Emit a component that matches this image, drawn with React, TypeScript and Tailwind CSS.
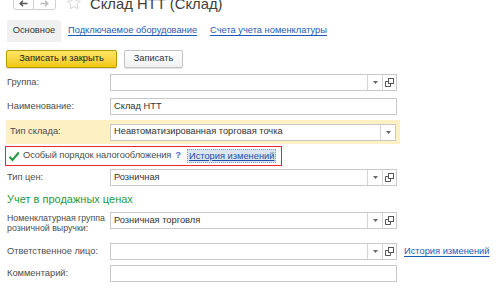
import React from 'react';

const F = { fontFamily: '"Liberation Sans", Arial, sans-serif' };

const Drop: React.FC = () => (
  <div className="w-[15px] h-full border-l border-[#d4d4d4] flex items-center justify-center">
    <svg width="5" height="3" viewBox="0 0 5 3"><path d="M0 0h5L2.5 3z" fill="#666" /></svg>
  </div>
);

const OpenBtn: React.FC = () => (
  <div className="w-[14px] h-full border-l border-[#d4d4d4] flex items-center justify-center">
    <svg width="9" height="9" viewBox="0 0 9 9" fill="none" stroke="#555" strokeWidth="1">
      <rect x="3.5" y="0.5" width="5" height="5" />
      <path d="M3.5 3.5h-3v5h5v-3" />
    </svg>
  </div>
);

const Field: React.FC<{ value?: string; drop?: boolean; open?: boolean }> = ({ value, drop, open }) => (
  <div className="w-[287px] h-[17px] border border-[#c8c8c8] bg-white flex items-stretch">
    <div className="flex-1 px-[3px] flex items-center text-[9.3px] text-[#333] whitespace-nowrap">{value}</div>
    {drop && <Drop />}
    {open && <OpenBtn />}
  </div>
);

const Row: React.FC<{ label: React.ReactNode; children: React.ReactNode; className?: string }> = ({ label, children, className }) => (
  <div className={`flex items-center ${className ?? ''}`}>
    <div className="w-[104px] text-[9.3px] text-[#4d4d4d] leading-[11px] whitespace-nowrap">{label}</div>
    {children}
  </div>
);

const App: React.FC = () => {
  return (
    <div className="w-[500px] h-[300px] overflow-hidden bg-white relative" style={F}>
      {/* header */}
      <div className="flex items-end h-[21px] -mt-[11px] pl-[13px]">
        <div className="flex h-[20px] border border-[#cfcfcf] rounded-[3px] bg-white">
          <div className="w-[20px] flex items-end justify-center pb-[2px] border-r border-[#cfcfcf]">
            <svg width="9" height="7" viewBox="0 0 9 7"><path d="M8.5 3.5H1.5M4 0.8L1.2 3.5 4 6.2" stroke="#555" strokeWidth="1.4" fill="none" /></svg>
          </div>
          <div className="w-[21px] flex items-end justify-center pb-[2px]">
            <svg width="9" height="7" viewBox="0 0 9 7"><path d="M0.5 3.5H7.5M5 0.8L7.8 3.5 5 6.2" stroke="#bbb" strokeWidth="1.4" fill="none" /></svg>
          </div>
        </div>
        <svg className="ml-[10px] mb-[-1px]" width="16" height="16" viewBox="0 0 24 24" fill="none" stroke="#cfcfcf" strokeWidth="1.3">
          <path d="M12 2.5l2.9 6.1 6.6.8-4.9 4.6 1.3 6.6L12 17.3l-5.9 3.3 1.3-6.6-4.9-4.6 6.6-.8z" />
        </svg>
        <div className="ml-[8px] text-[14.8px] leading-[20px] text-[#404040] -mb-[4px] whitespace-nowrap">Склад НТТ (Склад)</div>
      </div>

      {/* tabs */}
      <div className="flex items-center mt-[10px] pl-[7px] h-[22px] text-[9.3px] whitespace-nowrap">
        <div className="h-full w-[54px] bg-[#f0f0f0] rounded-t-[3px] flex items-center justify-center text-[#333]">Основное</div>
        <a className="ml-[7px] text-[#1c5bb8] underline underline-offset-2">Подключаемое оборудование</a>
        <a className="ml-[13px] text-[#1c5bb8] underline underline-offset-2">Счета учета номенклатуры</a>
      </div>

      {/* buttons */}
      <div className="flex items-center gap-[7px] mt-[8px] pl-[6px] whitespace-nowrap">
        <div className="h-[18px] w-[111px] rounded-[2px] border border-[#b39b00] bg-gradient-to-b from-[#ffe566] to-[#f2c800] flex items-center justify-center text-[9.3px] text-[#222] shadow-[0_1px_1px_rgba(0,0,0,0.15)]">
          Записать и закрыть
        </div>
        <div className="h-[18px] w-[59px] rounded-[2px] border border-[#c4c4c4] bg-gradient-to-b from-white to-[#f1f1f1] flex items-center justify-center text-[9.3px] text-[#333] shadow-[0_1px_1px_rgba(0,0,0,0.12)]">
          Записать
        </div>
      </div>

      {/* form */}
      <div className="pl-[6px] mt-[6px]">
        <Row label={<span className="pl-[1px]">Группа:</span>}><Field drop open /></Row>
        <Row label={<span className="pl-[1px]">Наименование:</span>} className="mt-[7px]"><Field value="Склад НТТ" /></Row>
        <div className="mt-[5px] w-[394px] h-[24px] bg-[#fdf0c3] flex items-center whitespace-nowrap">
          <div className="w-[104px] pl-[4px] text-[9.3px] text-[#4d4d4d]">Тип склада:</div>
          <div className="w-[286px] h-[17px] border border-[#c8c8c8] bg-white flex items-stretch">
            <div className="flex-1 px-[3px] flex items-center text-[9.3px] text-[#333]">Неавтоматизированная торговая точка</div>
            <Drop />
          </div>
        </div>
        <div className="mt-[2px] -ml-[1px] w-[277px] h-[20px] border-[1.5px] border-[#e8262b] flex items-center text-[9.3px] whitespace-nowrap">
          <svg className="ml-[2px]" width="12" height="11" viewBox="0 0 12 11">
            <path d="M1.5 5.8L4.5 9 10.8 1.5" stroke="#1e9b3c" strokeWidth="2" fill="none" />
          </svg>
          <span className="ml-[3px] text-[#4d4d4d] tracking-[-0.1px]">Особый порядок налогообложения</span>
          <span className="ml-[4px] text-[#3d72c9] font-bold">?</span>
          <span className="ml-[6px] px-[1px] bg-[#dde5f0] border border-dotted border-[#8aa0c0] text-[#1c4fa8] underline leading-[12px]">История изменений</span>
        </div>
        <Row label={<span className="pl-[1px]">Тип цен:</span>} className="mt-[3px]"><Field value="Розничная" drop open /></Row>
        <div className="mt-[6px] pl-[1px] text-[11px] leading-[14px] text-[#1f9a3f] whitespace-nowrap">Учет в продажных ценах</div>
        <div className="flex items-start mt-[6px]">
          <div className="w-[104px] pl-[1px] pt-[1px] text-[8.8px] text-[#4d4d4d] leading-[10px] whitespace-nowrap">Номенклатурная группа<br />розничной выручки:</div>
          <Field value="Розничная торговля" drop open />
        </div>
        <Row label={<span className="pl-[1px]">Ответственное лицо:</span>} className="mt-[10px]">
          <Field drop open />
          <a className="ml-[7px] text-[9.3px] text-[#1c5bb8] underline underline-offset-2 whitespace-nowrap">История изменений</a>
        </Row>
        <Row label={<span className="pl-[1px]">Комментарий:</span>} className="mt-[5px]"><Field /></Row>
      </div>
    </div>
  );
};

export default App;
